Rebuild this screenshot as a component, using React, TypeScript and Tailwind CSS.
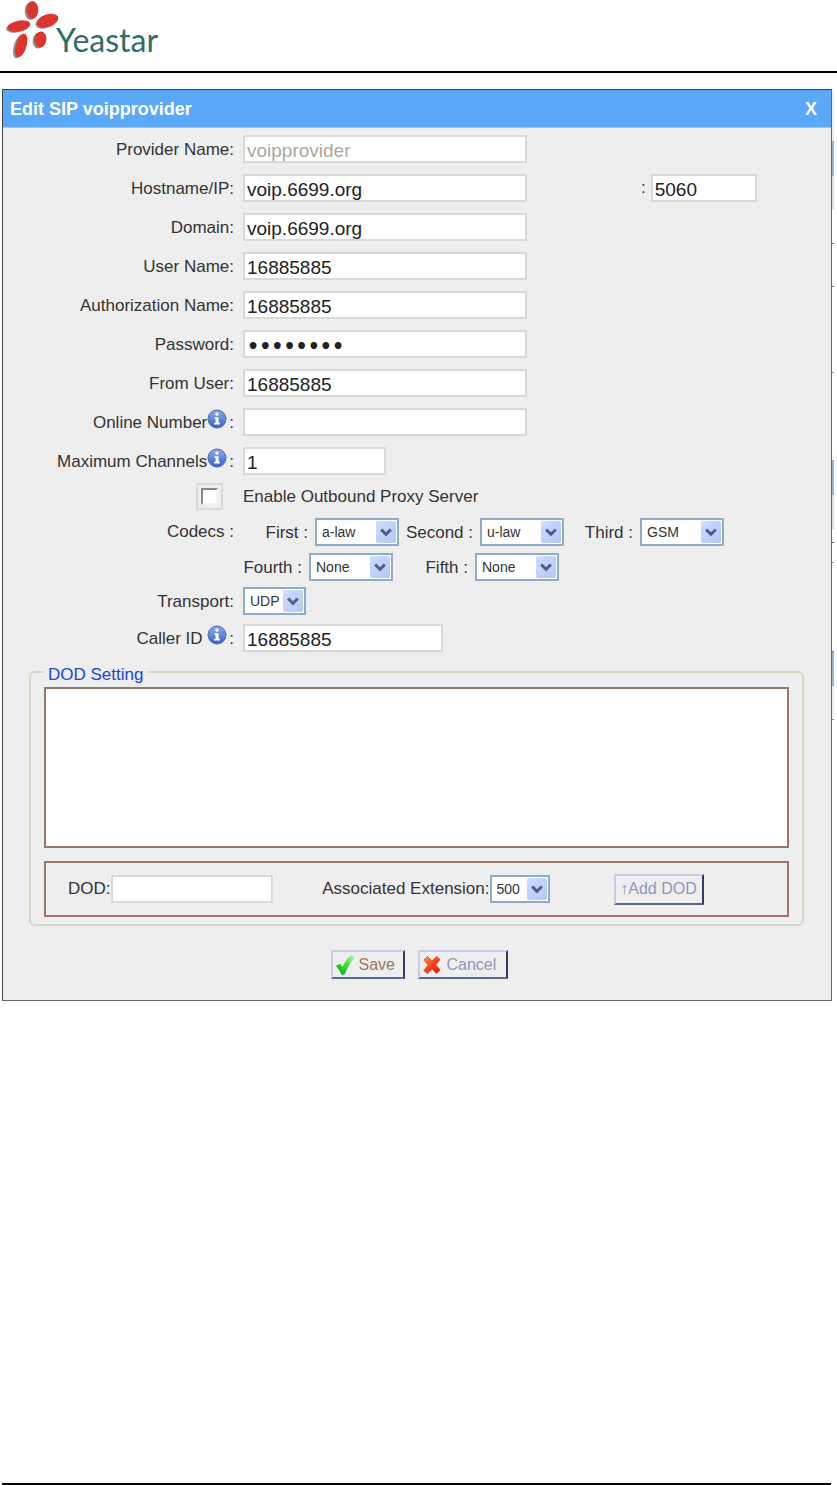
import type { ReactNode } from 'react';

type SelectBoxProps = {
  id: string;
  value: string;
  options: string[];
  className: string;
};

const inputClass =
  'h-7 border-2 border-[#d9d9d9] bg-white px-0.5 pt-1 text-[19px] leading-5 text-[#222] outline-none focus:border-[#7f9db9] disabled:text-[#aca899]';

const buttonClass =
  'flex items-center border-2 border-t-[#c3cdea] border-l-[#c3cdea] border-r-[#333a6b] border-b-[#5a6596] text-base';

const codecOptions = ['a-law', 'u-law', 'GSM', 'None'];

const codecRows = [
  [
    { id: 'first', label: 'First :', value: 'a-law', width: 'w-[72px]' },
    { id: 'second', label: 'Second :', value: 'u-law', width: 'w-[81px]' },
    { id: 'third', label: 'Third :', value: 'GSM', width: 'w-[76px]' },
  ],
  [
    { id: 'fourth', label: 'Fourth :', value: 'None', width: 'w-[66px]' },
    { id: 'fifth', label: 'Fifth :', value: 'None', width: 'w-[82px]' },
  ],
];

// Strip of the trunk list page that shows past the dialog
const pageStrip = [
  'h-[52px] bg-[#eeeeee]',
  'h-[35px] bg-[#95b8dc]',
  'h-[34px] bg-[#dddddd]',
  'h-[34px] border-b border-[#777]',
  'h-[43px] border-b border-[#777]',
  'h-[86px] border-b border-[#999]',
  'h-[87px]',
  'h-[35px] bg-[#95b8dc]',
  'h-[34px] bg-[#dddddd]',
  'h-[14px] border-b border-[#555]',
  'h-[20px] border-b border-[#999]',
  'h-[88px]',
  'h-[35px] border-t border-[#777] bg-[#95b8dc]',
  'h-[34px] border-b border-[#999] bg-[#eeeeee]',
];

const Logo = () => (
  <a href="#" className="flex items-start" aria-label="Yeastar">
    <svg width="58" height="60" viewBox="0 0 58 60" aria-hidden="true">
      <g fill="#8d8d8d" transform="translate(-1.5 1)">
        <ellipse cx="32" cy="10" rx="5.8" ry="9" />
        <ellipse cx="47.5" cy="20.700" rx="11" ry="6.2" transform="rotate(-20 47.5 20.7)" />
        <ellipse cx="19" cy="26" rx="11.5" ry="5.4" transform="rotate(-10 19 26)" />
        <ellipse cx="20.7" cy="45.5" rx="5.4" ry="12.2" transform="rotate(16 20.7 45.5)" />
        <ellipse cx="40" cy="39.5" rx="5.9" ry="8" transform="rotate(6 40 39.5)" />
      </g>
      <g fill="#dc3530">
        <ellipse cx="32.5" cy="10" rx="5.800" ry="9" />
        <ellipse cx="47.7" cy="20.7" rx="11" ry="6.2" transform="rotate(-20 47.7 20.7)" />
        <ellipse cx="19" cy="26" rx="11.5" ry="5.400" transform="rotate(-10 19 26)" />
        <ellipse cx="21.200" cy="45.5" rx="5.400" ry="12.2" transform="rotate(16 21.2 45.5)" />
        <ellipse cx="40.5" cy="39.5" rx="5.900" ry="8" transform="rotate(6 40.5 39.5)" />
      </g>
    </svg>
    <span className="-ml-0.5 pt-5 font-[Lato,sans-serif] text-[32px] leading-10 text-[#2f6d6d]">Yeastar</span>
  </a>
);

const InfoIcon = () => (
  <svg width="20" height="20" viewBox="0 0 20 20" role="img" aria-label="Info">
    <defs>
      <linearGradient id="info" x1="0" y1="0" x2="0" y2="1">
        <stop offset="0" stopColor="#8aabf0" />
        <stop offset="1" stopColor="#3a62c8" />
      </linearGradient>
    </defs>
    <circle cx="10" cy="10" r="9" fill="url(#info)" stroke="#4a66b4" strokeWidth="1" />
    <rect x="8.4" y="3.8" width="3.2" height="3" rx="1" fill="#fff" />
    <path d="M7.4 8.2h4.2v5.6h1.2v1.6H7.2v-1.6h1.4V9.8H7.4z" fill="#fff" />
  </svg>
);

const SaveIcon = () => (
  <svg width="20" height="22" viewBox="0 0 20 22" aria-hidden="true">
    <defs>
      <linearGradient id="save" x1="1" y1="0" x2="0.3" y2="1">
        <stop offset="0" stopColor="#b8f5b0" />
        <stop offset="0.5" stopColor="#3fdc38" />
        <stop offset="1" stopColor="#12b612" />
      </linearGradient>
    </defs>
    <path d="M.8 12 5 9.500 7.500 13C10 7.500 12.500 3.500 16 1L19 2.500 18.500 5C14.500 9.500 12 14.500 10 20L7 21.500C5.500 18 3.500 15 .8 12z" fill="url(#save)" />
  </svg>
);

const CancelIcon = () => (
  <svg width="18" height="20" viewBox="0 0 18 20" aria-hidden="true">
    <defs>
      <linearGradient id="cancel" x1="0" y1="0" x2="1" y2="1">
        <stop offset="0" stopColor="#ff9a5c" />
        <stop offset="0.5" stopColor="#f9431c" />
        <stop offset="1" stopColor="#e80c0c" />
      </linearGradient>
    </defs>
    <path
      d="M4.500 1.500 9 6 13.500 1.500 17 4.500 12.700 10 17.200 15 13.500 18.500 9 14 4.500 18.500 .8 15.500 5.200 10 .8 5z"
      fill="url(#cancel)"
      stroke="#d8441c"
      strokeWidth="0.8"
    />
  </svg>
);

const SelectBox = ({ id, value, options, className }: SelectBoxProps) => (
  <span className="relative flex">
    <select
      id={id}
      defaultValue={value}
      className={`h-7 appearance-none border-2 border-[#8eabc8] bg-white pl-[5px] text-sm text-[#333] outline-none ${className}`}
    >
      {options.map((option) => (
        <option key={option}>{option}</option>
      ))}
    </select>
    <span className="pointer-events-none absolute top-[3px] right-[3px] flex h-[22px] w-5 items-center justify-center rounded-xs bg-linear-to-br from-[#cfdcfd] to-[#b0c8f8]">
      <svg width="12" height="9" viewBox="0 0 12 9" aria-hidden="true">
        <path d="M1.200 1.500 6 6.300 10.800 1.500" fill="none" stroke="#4d6185" strokeWidth="3" />
      </svg>
    </span>
  </span>
);

const Row = ({ id, label, info, children }: { id: string; label: string; info?: boolean; children: ReactNode }) => (
  <div className="flex items-center gap-[9px]">
    <label htmlFor={id} className="flex h-7 w-[231px] items-center justify-end pt-0.5">
      {label}
      {info && (
        <>
          <span className="mr-0.5 pb-2">
            <InfoIcon />
          </span>
          :
        </>
      )}
    </label>
    {children}
  </div>
);

export default function App() {
  return (
    <div className="flex min-h-screen flex-col bg-white font-['Liberation_Sans',Arial,sans-serif] text-[17px] text-[#333]">
      <header className="h-[73px] border-b-2 border-black">
        <Logo />
      </header>

      <div className="mt-4 flex items-start pr-[3px] pl-0.5">
        <main className="flex-1 border border-[#444] border-r-[#666] border-b-[#666] bg-[#eeeeee]">
          <div className="flex h-[38px] items-center justify-between border-b border-[#9ccbf9] bg-[#5ba8f9] pr-3 pl-[7px] text-lg font-bold text-white">
            <h1>Edit SIP voipprovider</h1>
            <button type="button" aria-label="Close" className="px-0.5">
              X
            </button>
          </div>

          <form className="pt-[7px] pb-[21px]" onSubmit={(e) => e.preventDefault()}>
            <div className="flex flex-col gap-[11px]">
              <Row id="provider" label="Provider Name:">
                <input id="provider" className={`${inputClass} w-[284px]`} defaultValue="voipprovider" disabled />
              </Row>
              <Row id="hostname" label="Hostname/IP:">
                <input id="hostname" className={`${inputClass} w-[284px]`} defaultValue="voip.6699.org" />
                <label htmlFor="port" className="ml-[105px]">
                  :
                </label>
                <input id="port" className={`${inputClass} -ml-1 w-[106px]`} defaultValue="5060" />
              </Row>
              <Row id="domain" label="Domain:">
                <input id="domain" className={`${inputClass} w-[284px]`} defaultValue="voip.6699.org" />
              </Row>
              <Row id="username" label="User Name:">
                <input id="username" className={`${inputClass} w-[284px]`} defaultValue="16885885" />
              </Row>
              <Row id="authname" label="Authorization Name:">
                <input id="authname" className={`${inputClass} w-[284px]`} defaultValue="16885885" />
              </Row>
              <Row id="password" label="Password:">
                <input
                  id="password"
                  type="password"
                  className={`${inputClass} w-[284px] font-['DejaVu_Sans',sans-serif] font-bold`}
                  defaultValue="16885885"
                />
              </Row>
              <Row id="fromuser" label="From User:">
                <input id="fromuser" className={`${inputClass} w-[284px]`} defaultValue="16885885" />
              </Row>
              <Row id="online" label="Online Number" info>
                <input id="online" className={`${inputClass} w-[284px]`} />
              </Row>
              <Row id="channels" label="Maximum Channels" info>
                <input id="channels" className={`${inputClass} w-[143px]`} defaultValue="1" />
              </Row>
            </div>

            <div className="mt-2 flex items-center gap-5 pl-[193px]">
              <span className="flex size-[27px] items-center justify-center border-2 border-[#d9d9d9]">
                <input
                  id="proxy"
                  type="checkbox"
                  className="size-[17px] appearance-none border-2 border-t-[#8d897a] border-r-[#f5f3ea] border-b-[#f5f3ea] border-l-[#8d897a] bg-white checked:bg-[#4d6185]"
                />
              </span>
              <label htmlFor="proxy">Enable Outbound Proxy Server</label>
            </div>

            <div className="mt-2 flex items-start gap-[9px]">
              <span className="w-[231px] text-right leading-7">Codecs :</span>
              <div className="flex flex-col gap-[7px]">
                {codecRows.map((row, i) => (
                  <div key={i} className="flex items-center">
                    {row.map((codec) => (
                      <div key={codec.id} className="flex items-center">
                        <label htmlFor={codec.id} className={`${codec.width} pt-0.5 pr-[7px] text-right`}>
                          {codec.label}
                        </label>
                        <SelectBox id={codec.id} value={codec.value} options={codecOptions} className="w-[84px]" />
                      </div>
                    ))}
                  </div>
                ))}
              </div>
            </div>

            <div className="mt-1.5 flex flex-col gap-[9px]">
              <Row id="transport" label="Transport:">
                <SelectBox id="transport" value="UDP" options={['UDP', 'TCP', 'TLS']} className="w-[63px]" />
              </Row>
              <Row id="callerid" label={'Caller ID\u00a0'} info>
                <input id="callerid" className={`${inputClass} w-[200px]`} defaultValue="16885885" />
              </Row>
            </div>

            <fieldset className="mt-3 mr-[27px] ml-[26px] rounded-md border-2 border-[#d5d5c3] px-[13px] pb-[7px]">
              <legend className="h-4 px-1 leading-[22px] text-[#1a44dd]">DOD Setting</legend>
              <div className="mt-[7px] h-[161px] border-2 border-[#9b7761] bg-white" />
              <div className="mt-[13px] flex h-14 items-center border-2 border-[#9b7761] pl-[22px]">
                <label htmlFor="dod">DOD:</label>
                <input id="dod" className={`${inputClass} w-[162px]`} />
                <label htmlFor="extension" className="ml-[34px] w-[183px] text-right">
                  Associated Extension:
                </label>
                <SelectBox id="extension" value="500" options={['500', '501', '502']} className="w-[60px]" />
                <button
                  type="button"
                  className={`${buttonClass} ml-16 h-[31px] w-[90px] justify-center whitespace-nowrap text-[#8e97c0]`}
                >
                  ↑Add DOD
                </button>
              </div>
            </fieldset>

            <div className="mt-6 flex justify-center gap-[13px] pl-1">
              <button type="submit" className={`${buttonClass} h-[29px] w-[74px] gap-1 pl-0.5 text-[#9c7763]`}>
                <SaveIcon />
                Save
              </button>
              <button type="button" className={`${buttonClass} h-[29px] w-[90px] gap-1.5 pl-[3px] text-[#8e97c0]`}>
                <CancelIcon />
                Cancel
              </button>
            </div>
          </form>
        </main>

        <div className="flex w-0.5 flex-col" aria-hidden="true">
          {pageStrip.map((segment, i) => (
            <div key={i} className={segment} />
          ))}
        </div>
      </div>

      <footer className="mr-1.5 ml-0.5 mt-auto border-b-2 border-black" />
    </div>
  );
}
